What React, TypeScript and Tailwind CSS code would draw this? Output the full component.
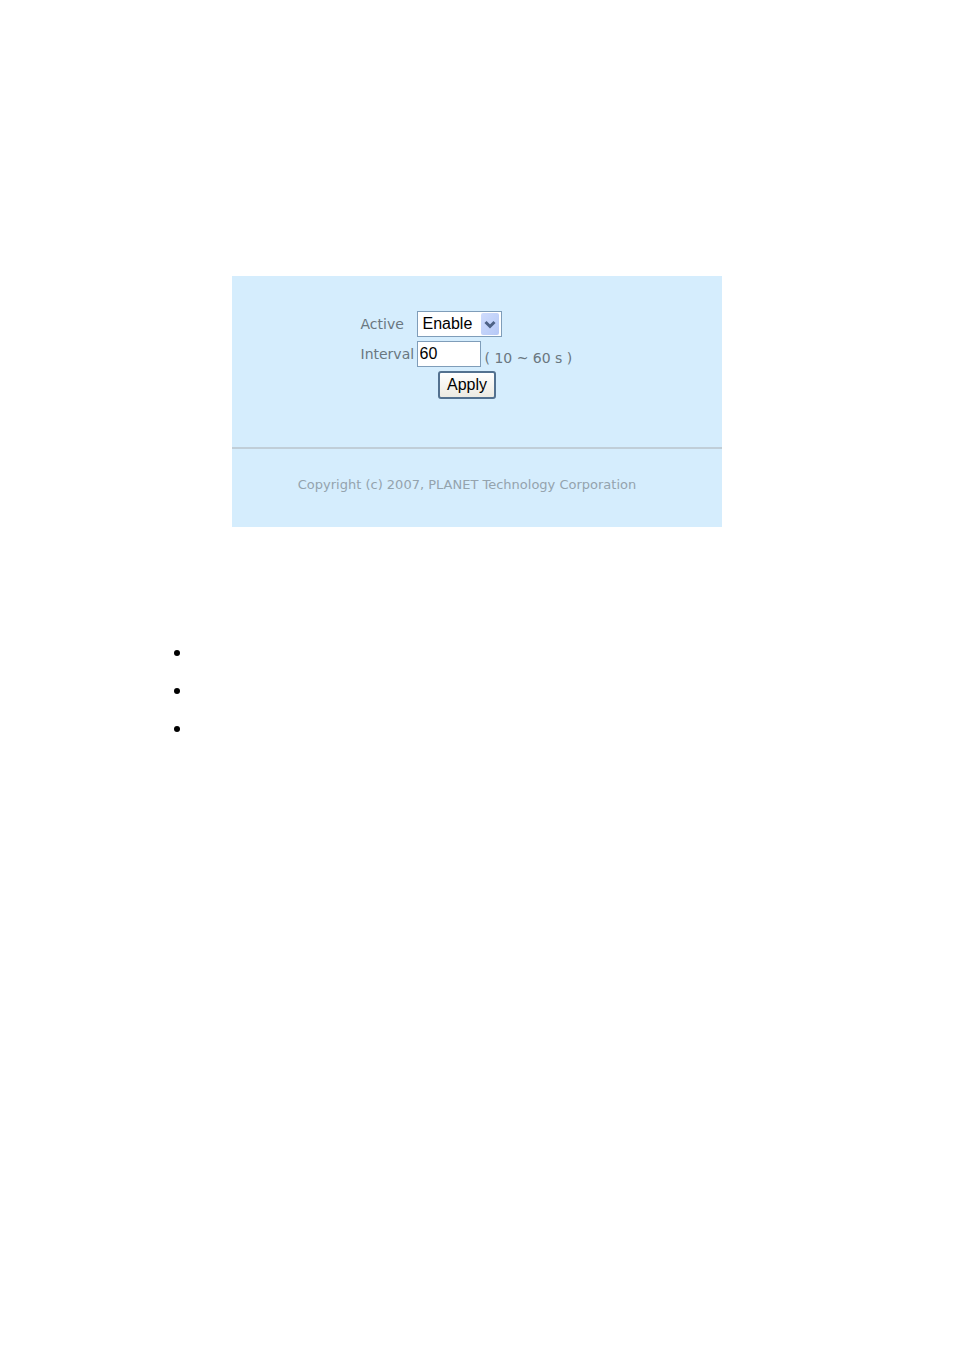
import { useState, type FormEvent } from "react";

const NOTES = ["active", "interval", "apply"];

/** Drop-down with the blue XP-style arrow plate laid over its right edge. */
function ActiveSelect({
  value,
  onChange,
}: {
  value: string;
  onChange: (value: string) => void;
}) {
  return (
    <div className="relative w-[85px]">
      <select
        id="active"
        value={value}
        onChange={(e) => onChange(e.target.value)}
        className="block h-[26px] w-full appearance-none rounded-none border border-[#7f9db9] bg-white pl-[5px] font-['Liberation_Sans',Arial,sans-serif] text-base leading-6 text-black"
      >
        <option>Enable</option>
        <option>Disable</option>
      </select>
      <span className="pointer-events-none absolute top-[2px] right-[3px] flex h-[22px] w-[18px] items-center justify-center rounded-xs bg-linear-to-br from-[#cfdcfd] to-[#b5c8f6]">
        <svg width="12" height="9" viewBox="0 0 12 9" fill="none" aria-hidden>
          <path d="M1.5 2 6 6.5 10.5 2" stroke="#4d6185" strokeWidth="3" />
        </svg>
      </span>
    </div>
  );
}

function SettingsForm() {
  const [active, setActive] = useState("Enable");
  const [interval, setInterval] = useState("60");

  const submit = (e: FormEvent) => e.preventDefault();

  return (
    <form
      onSubmit={submit}
      className="flex w-[213px] flex-col gap-1 text-sm leading-4 text-[#6a7780]"
    >
      <div className="flex items-center">
        <label htmlFor="active" className="w-14 shrink-0">
          Active
        </label>
        <ActiveSelect value={active} onChange={setActive} />
      </div>
      <div className="flex items-center">
        <label htmlFor="interval" className="w-14 shrink-0">
          Interval
        </label>
        <input
          id="interval"
          type="text"
          value={interval}
          onChange={(e) => setInterval(e.target.value)}
          className="h-[26px] w-16 shrink-0 border border-[#7f9db9] bg-white px-[2px] font-['Liberation_Sans',Arial,sans-serif] text-base text-black"
        />
        <span className="self-end pb-px pl-1 whitespace-nowrap">
          ( 10 ~ 60 s )
        </span>
      </div>
      <button
        type="submit"
        className="h-7 w-[58px] self-center rounded-[3px] border-2 border-[#53718f] bg-linear-to-b from-white to-[#eceae2] font-['Liberation_Sans',Arial,sans-serif] text-base leading-5 text-black"
      >
        Apply
      </button>
    </form>
  );
}

export default function App() {
  return (
    <main className="min-h-screen bg-white pt-[276px] font-['DejaVu_Sans',Verdana,sans-serif]">
      <section className="mx-auto w-full max-w-[490px] bg-[#d5edfd]">
        <div className="flex justify-center pt-[35px] pr-5 pb-12">
          <SettingsForm />
        </div>
        <footer className="border-t-2 border-[#c0ced8] pt-7 pr-5 pb-[34px] text-center text-[13px] leading-4 text-[#94a3ad]">
          Copyright (c) 2007, PLANET Technology Corporation
        </footer>
      </section>
      <ul className="mx-auto mt-[113px] flex w-full max-w-[610px] list-disc flex-col gap-[14px] pl-5 text-lg leading-6 text-black">
        {NOTES.map((note) => (
          <li key={note} />
        ))}
      </ul>
    </main>
  );
}
